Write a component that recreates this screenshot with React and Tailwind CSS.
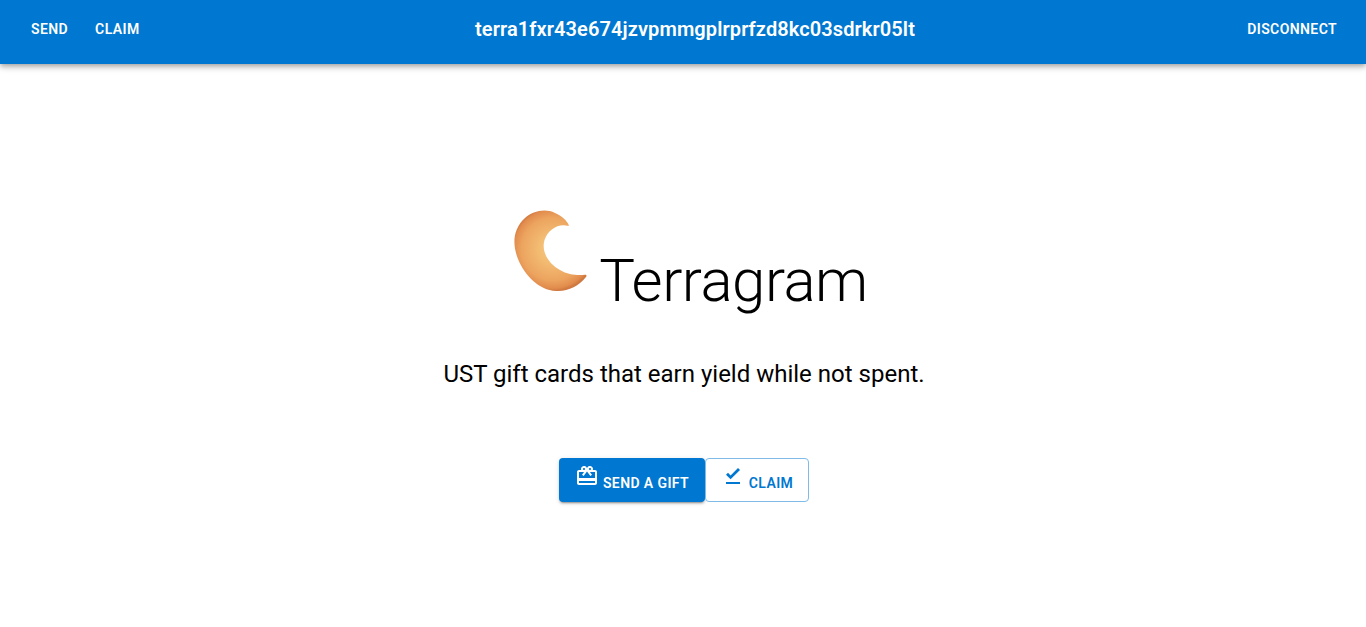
const giftPath = "M20 6h-2.18c.11-.31.18-.65.18-1 0-1.66-1.34-3-3-3-1.05 0-1.96.54-2.5 1.35l-.5.67-.5-.68C10.96 2.54 10.05 2 9 2 7.34 2 6 3.34 6 5c0 .35.07.69.18 1H4c-1.11 0-1.99.89-1.99 2L2 19c0 1.11.89 2 2 2h16c1.11 0 2-.89 2-2V8c0-1.11-.89-2-2-2zm-5-2c.55 0 1 .45 1 1s-.45 1-1 1-1-.45-1-1 .45-1 1-1zM9 4c.55 0 1 .45 1 1s-.45 1-1 1-1-.45-1-1 .45-1 1-1zm11 15H4v-2h16v2zm0-5H4V8h5.08L7 10.83 8.62 12 12 7.4l3.38 4.6L17 10.83 14.92 8H20v6z";

function Moon() {
  return (
    <svg width="76" height="86" viewBox="0 0 76 86" className="shrink-0">
      <defs>
        <radialGradient id="moonFill" gradientUnits="userSpaceOnUse" cx="40" cy="40" r="42">
          <stop offset="0%" stopColor="#f5c880" />
          <stop offset="35%" stopColor="#f3bb72" />
          <stop offset="75%" stopColor="#eca45f" />
          <stop offset="93%" stopColor="#e28c4d" />
          <stop offset="100%" stopColor="#cf7840" />
        </radialGradient>
      </defs>
      <path
        d="M55.5 17C45 14 35 21 31.5 31C28 43 36 55 47 61C55 66 65 66.5 72 65.8C74 65.8 73.6 67 73 68C66 77 54 83 43 82C26 81 12 67 5 50C-1 35 0 20 12 9C20 2 32 -1 42 4C49 7 54 12 55.5 15.5C55.8 16.2 55.8 16.8 55.5 17Z"
        fill="url(#moonFill)"
      />
    </svg>
  );
}

export default function App() {
  return (
    <div className="min-h-[627px] bg-white text-black font-['Roboto',sans-serif]">
      <header className="h-16 pb-[6px] bg-[#0077d0] text-white flex items-center justify-between px-6 shadow-[0_2px_4px_-1px_rgba(0,0,0,0.2),0_4px_5px_0_rgba(0,0,0,0.14),0_1px_10px_0_rgba(0,0,0,0.12)]">
        <nav className="flex gap-3 w-[324px]">
          <span className="px-[7px] py-[6px] text-sm font-semibold tracking-[0.4px] leading-[24px]">SEND</span>
          <span className="px-[8px] py-[6px] text-sm font-semibold tracking-[0.4px] leading-[24px]">CLAIM</span>
        </nav>
        <div className="text-xl font-semibold leading-8 tracking-[0.1px]">terra1fxr43e674jzvpmmgplrprfzd8kc03sdrkr05lt</div>
        <div className="w-[300px] flex justify-end">
          <span className="px-[5px] py-[6px] text-sm font-semibold tracking-[0.4px] leading-[24px]">DISCONNECT</span>
        </div>
      </header>
      <main className="flex flex-col items-center pt-[145px]">
        <div className="flex items-start gap-[10px] h-[110px] ml-[15px]">
          <Moon />
          <h1 className="text-[60px] font-light leading-[72px] tracking-[-0.5px] mt-9">Terragram</h1>
        </div>
        <p className="mt-[39px] ml-[2px] text-2xl leading-8">UST gift cards that earn yield while not spent.</p>
        <div className="mt-[68px] ml-[2px] flex">
          <button className="h-11 pt-[6px] w-[146px] flex items-center justify-center bg-[#0077d0] text-white rounded text-sm font-semibold tracking-[0.4px] shadow-[0_3px_1px_-2px_rgba(0,0,0,0.2),0_2px_2px_0_rgba(0,0,0,0.14),0_1px_5px_0_rgba(0,0,0,0.12)]">
            <svg width="24" height="24" viewBox="0 0 24 24" fill="currentColor" className="mr-1 -mt-[14px]"><path d={giftPath} /></svg>
            SEND A GIFT
          </button>
          <button className="h-11 pt-[6px] w-[104px] flex items-center justify-center bg-white text-[#0077d0] rounded border border-[#80bbe7] text-sm font-semibold tracking-[0.4px]">
            <svg width="24" height="24" viewBox="0 0 24 24" fill="currentColor" className="mr-1 -mt-[14px]"><path d="M5 18h14v2H5v-2zm4.6-2.7L5 10.7l2-1.9 2.6 2.6L17 4l2 2-9.4 9.3z" /></svg>
            CLAIM
          </button>
        </div>
      </main>
    </div>
  );
}
